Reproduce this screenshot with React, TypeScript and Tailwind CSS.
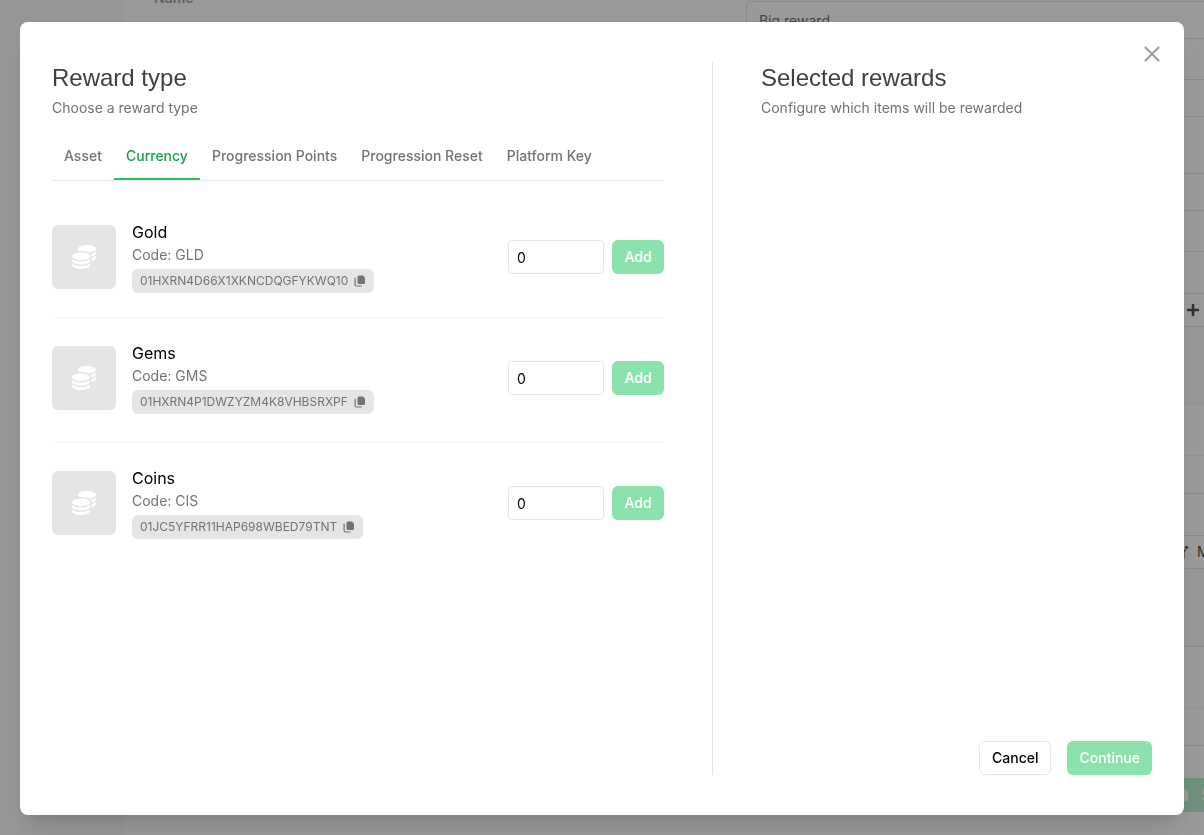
import { useState } from 'react';
import { FaPlus, FaSave } from 'react-icons/fa';
import { FaCoins } from 'react-icons/fa6';
import { X } from 'lucide-react';

const TABS = ['Asset', 'Currency', 'Progression Points', 'Progression Reset', 'Platform Key'];

const CURRENCIES = [
  { name: 'Gold', code: 'GLD', id: '01HXRN4D66X1XKNCDQGFYKWQ10' },
  { name: 'Gems', code: 'GMS', id: '01HXRN4P1DWZYZM4K8VHBSRXPF' },
  { name: 'Coins', code: 'CIS', id: '01JC5YFRR11HAP698WBED79TNT' },
];

interface Currency {
  name: string;
  code: string;
  id: string;
}

function CopyIcon() {
  return (
    <svg viewBox="0 0 12 12" className="size-3" fill="currentColor" aria-hidden="true">
      <path d="M5 .5h4L11 2.500v5.200a1.300 1.300 0 0 1-1.300 1.300H5a1.500 1.500 0 0 1-1.500-1.500V2A1.500 1.500 0 0 1 5 .5Z" />
      <path
        d="M1.100 3.200v6.300a1.500 1.500 0 0 0 1.500 1.500h4.600"
        fill="none"
        stroke="currentColor"
        strokeWidth="1.200"
        strokeLinecap="round"
      />
    </svg>
  );
}

function SproutIcon() {
  return (
    <svg viewBox="0 0 14 14" className="size-3.5" fill="currentColor" aria-hidden="true">
      <path d="m11.500.5 2 2-2 2-2-2z" />
      <path d="M2 4h7l2 1.500L9.500 7v6.500H8V8L2 6z" />
    </svg>
  );
}

function PanelHeader({ title, subtitle }: { title: string; subtitle: string }) {
  return (
    <header>
      <h2 className="font-['Liberation_Sans',sans-serif] text-2xl text-neutral-700">{title}</h2>
      <p className="mt-1 text-sm text-neutral-500">{subtitle}</p>
    </header>
  );
}

function CurrencyRow({ currency }: { currency: Currency }) {
  const [amount, setAmount] = useState('0');

  return (
    <li className="flex items-center border-b border-neutral-100 pt-6 pb-7 first:pt-10 first:pb-6 last:border-b-0">
      <div className="flex size-16 shrink-0 items-center justify-center rounded-md bg-neutral-200">
        <FaCoins className="size-6 text-white" />
      </div>
      <div className="ml-4 flex min-w-0 flex-1 flex-col items-start">
        <h3 className="mb-0.5 text-base leading-[22px] text-black">{currency.name}</h3>
        <p className="text-sm leading-5 text-neutral-500">Code: {currency.code}</p>
        <button
          type="button"
          className="mt-1 flex h-6 items-center gap-1.5 rounded-md bg-neutral-200 px-2 text-xs text-neutral-500"
          onClick={() => navigator.clipboard?.writeText(currency.id)}
        >
          {currency.id}
          <CopyIcon />
        </button>
      </div>
      <input
        type="text"
        inputMode="numeric"
        aria-label={`${currency.name} amount`}
        value={amount}
        onChange={(e) => setAmount(e.target.value)}
        className="h-[34px] w-24 rounded-sm border border-neutral-200 px-2 text-sm text-black"
      />
      <button
        type="button"
        disabled={Number(amount) <= 0}
        className="ml-2 h-[34px] w-13 rounded-md bg-green-500 text-sm font-medium text-white disabled:bg-[#8ce2ac]"
      >
        Add
      </button>
    </li>
  );
}

function RewardForm() {
  return (
    <div className="flex h-screen overflow-hidden bg-white" aria-hidden="true" inert>
      <aside className="w-[124px] shrink-0 bg-neutral-50" />
      <main className="grid flex-1 grid-cols-[592px_1fr] pl-[30px] text-sm">
        <span className="-mt-3 font-semibold text-neutral-400">Name</span>
        <div className="-mr-10 pt-px">
          <input
            type="text"
            aria-label="Name"
            defaultValue="Big reward"
            className="block h-[38px] w-full rounded-md border border-neutral-200 px-3 text-neutral-500"
          />
          <div className="mt-10 h-[38px] border-y border-neutral-200" />
          <div className="mt-14 h-[38px] border-y border-neutral-200" />
          <div className="mt-10 h-[43px] border-y border-neutral-200" />
          <div className="flex h-[33px] items-center justify-end border-b border-neutral-200 pr-11">
            <FaPlus className="size-3.5 text-neutral-600" />
          </div>
          <div className="h-[78px] border-b border-neutral-100 bg-neutral-50" />
          <div className="h-[51px] border-b border-neutral-100" />
          <div className="h-[38px] border-b border-neutral-200" />
          <div className="h-[42px] border-b border-neutral-200" />
          <div className="flex h-[33px] items-center justify-end gap-2 border-b border-neutral-200 text-neutral-600">
            <SproutIcon />
            <span className="w-[47px]">Max</span>
          </div>
          <div className="h-[78px] border-b border-neutral-200 bg-neutral-50" />
          <div className="h-[61px] border-b border-neutral-100" />
          <div className="h-[38px] border-b border-neutral-200" />
          <button
            type="button"
            className="mt-8 flex h-[34px] w-full items-center justify-end gap-3 bg-[#b9f0cf] text-white"
          >
            <FaSave className="size-3.5" />
            <span className="w-[43px] text-left">Save</span>
          </button>
        </div>
      </main>
    </div>
  );
}

export default function App() {
  const [activeTab, setActiveTab] = useState('Currency');

  return (
    <div className="font-[Inter,sans-serif]">
      <RewardForm />
      <div className="fixed inset-0 flex bg-black/40 px-5 pt-[22px] pb-5">
        <div
          role="dialog"
          aria-modal="true"
          aria-label="Add rewards"
          className="relative flex flex-1 rounded-lg bg-white px-8 py-10 shadow-xl"
        >
          <section className="w-3/5 pr-12">
            <PanelHeader title="Reward type" subtitle="Choose a reward type" />
            <div role="tablist" className="mt-3 flex border-b border-neutral-200">
              {TABS.map((tab) => (
                <button
                  key={tab}
                  type="button"
                  role="tab"
                  aria-selected={tab === activeTab}
                  onClick={() => setActiveTab(tab)}
                  className={
                    tab === activeTab
                      ? 'h-[50px] border-b-2 border-[#22c55e] px-3 pt-1 text-sm font-medium text-[#16a34a]'
                      : 'h-[50px] border-b-2 border-transparent px-3 pt-1 text-sm font-medium text-neutral-500'
                  }
                >
                  {tab}
                </button>
              ))}
            </div>
            <ul>
              {CURRENCIES.map((currency) => (
                <CurrencyRow key={currency.id} currency={currency} />
              ))}
            </ul>
          </section>

          <section className="flex w-2/5 flex-col justify-between border-l border-neutral-200 pl-12">
            <PanelHeader title="Selected rewards" subtitle="Configure which items will be rewarded" />
            <footer className="flex justify-end gap-4">
              <button
                type="button"
                className="h-[34px] rounded-md border border-neutral-200 px-3 text-sm font-medium text-black"
              >
                Cancel
              </button>
              <button
                type="button"
                disabled
                className="h-[34px] rounded-md bg-[#8ce2ac] px-3 text-sm font-medium text-white"
              >
                Continue
              </button>
            </footer>
          </section>

          <button type="button" aria-label="Close" className="absolute top-[19px] right-[19px] text-neutral-400">
            <X className="size-[26px]" />
          </button>
        </div>
      </div>
    </div>
  );
}
